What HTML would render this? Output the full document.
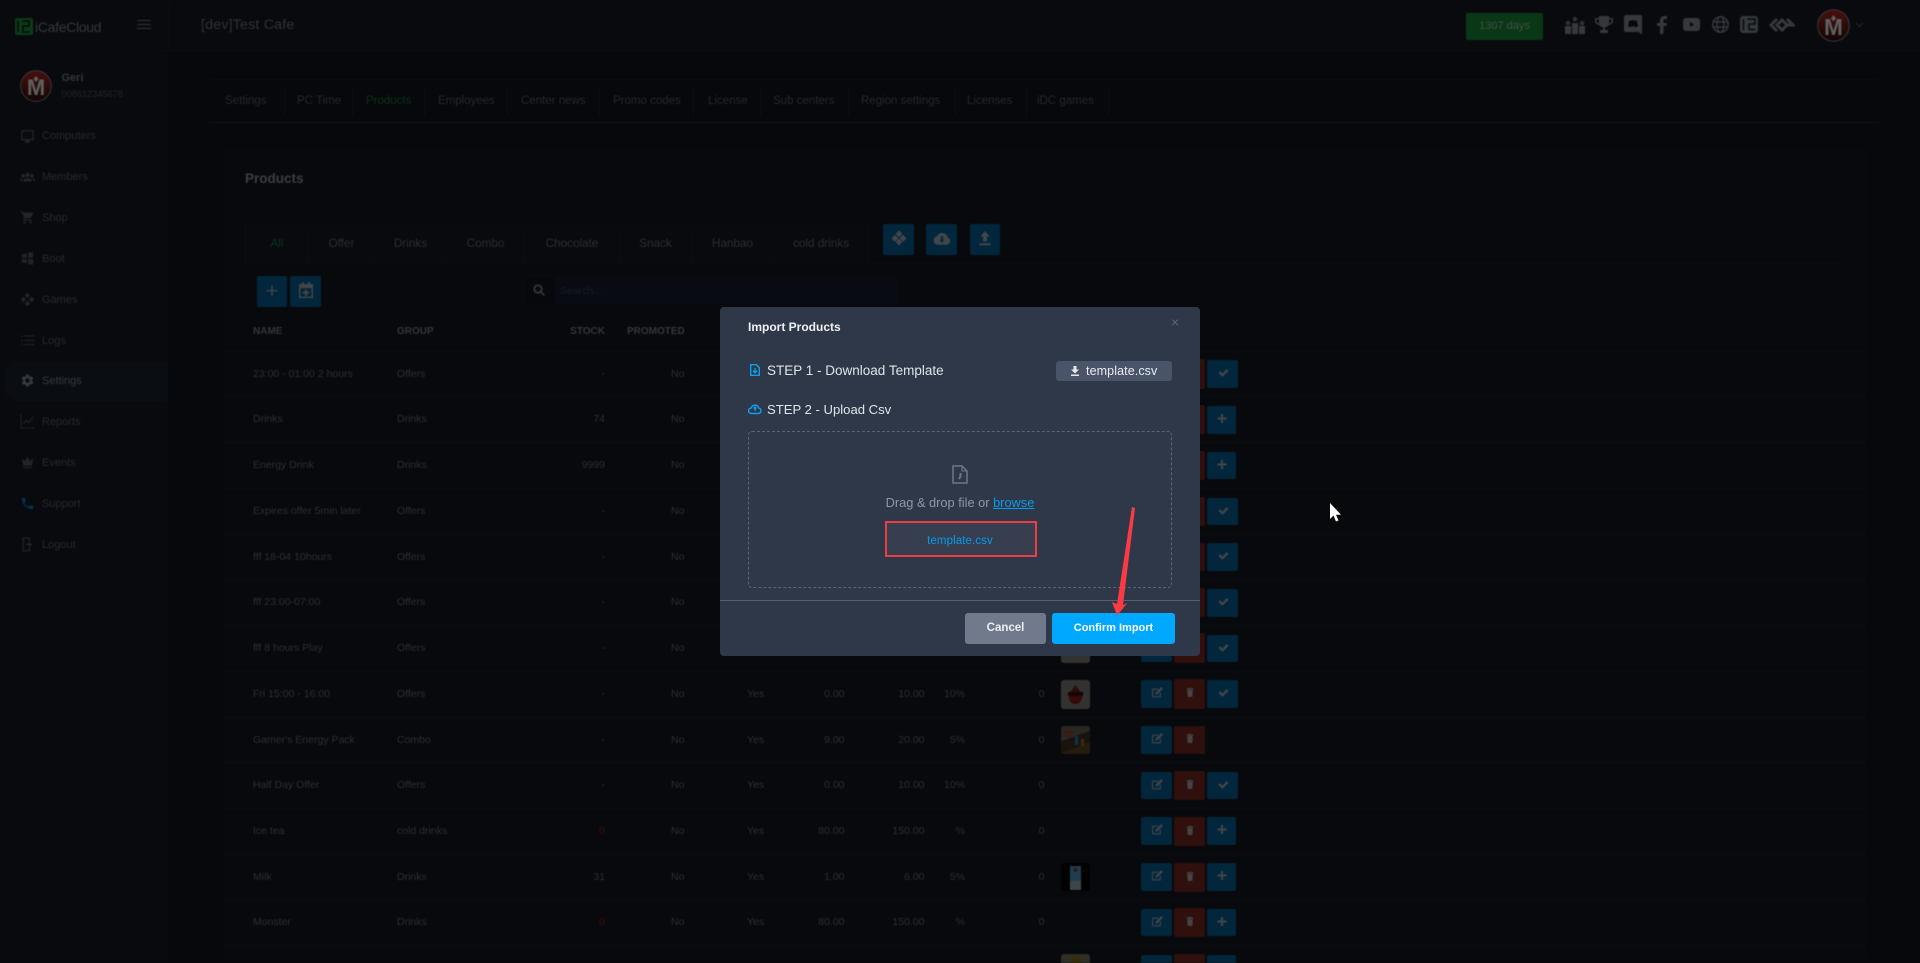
<!DOCTYPE html>
<html lang="en"><head><meta charset="utf-8"><title>Import Products</title>
<style>
*{box-sizing:border-box}
html,body{margin:0;padding:0;width:1920px;height:963px;overflow:hidden;background:#06080b;font-family:"Liberation Sans",sans-serif}
.a{position:absolute}
#bg{position:absolute;left:0;top:0;width:1920px;height:963px;filter:blur(.6px);color:#2b2e32;font-size:10.5px;overflow:hidden}
.t{position:absolute;white-space:nowrap;line-height:16px;height:16px}
.m{position:absolute;left:42px;color:#25282c;font-size:11px;line-height:16px;white-space:nowrap}
.i{position:absolute;left:20px;width:15px;height:15px;fill:#212428}
.tb{position:absolute;top:92.5px;line-height:16px;font-size:11.5px;color:#25282c;white-space:nowrap}
.d{position:absolute;top:87px;width:1px;height:30px;background:#0d1015}
.c{position:absolute;top:225px;height:38px;background:#080a0e;border-right:1px solid #0c0e13;text-align:center;line-height:38px;font-size:11.7px;color:#2a2d31}
.bb{position:absolute;background:#02263c;border-radius:2px}
.bb svg,.br svg{position:absolute;left:50%;top:50%;transform:translate(-50%,-62%);fill:#434649}
.br{position:absolute;background:#2f100c;border-radius:2px}
.l{position:absolute;left:222px;width:1645px;height:1px;background:#0a0c10}
.n{left:253px}.g{left:397px}
.s{left:544px;width:61px;text-align:right}
.p{left:671px}.y{left:747px}
.c1{left:784px;width:60.5px;text-align:right}
.c2{left:864px;width:60.5px;text-align:right}
.c3{left:905px;width:60px;text-align:right}
.c4{left:984px;width:60.5px;text-align:right}
.red{color:#440d0a}
.th{font-weight:bold;font-size:10px;color:#33363a}
.top-i{position:absolute;fill:#35383c}
#modal{position:absolute;left:720px;top:307px;width:480px;height:349px;background:#2f3849;border-radius:4px;color:#dfe3ea}
</style></head><body>
<svg width="0" height="0" style="position:absolute"><defs>
<symbol id="ed" viewBox="0 0 24 24"><path d="M3 5h11v2H5v12h12v-7h2v9H3zM20 2l3 3-10 10-4 1 1-4z"/></symbol>
<symbol id="tr" viewBox="0 0 24 24"><path d="M6 7h12l-1 15H7zM5 3h4l1-1h4l1 1h4v3H5z"/></symbol>
<symbol id="ck" viewBox="0 0 24 24"><path d="M2 13l4-4 5 5L20 4l4 4-13 13z"/></symbol>
<symbol id="pl" viewBox="0 0 24 24"><path d="M10 3h4v7h7v4h-7v7h-4v-7H3v-4h7z"/></symbol>
<linearGradient id="rg" x1="0" y1="0" x2="0" y2="1"><stop offset="0" stop-color="#4a0f0c"/><stop offset=".55" stop-color="#2a0a08"/><stop offset="1" stop-color="#120505"/></linearGradient>
</defs></svg>

<div id="bg">
<div class="a" style="left:0;top:51px;width:168px;height:912px;background:#080a0e"></div>
<div class="a" style="left:0;top:0;width:1920px;height:51px;background:#080a0e;border-bottom:1px solid #0c0e13"></div>
<div class="a" style="left:168px;top:0;width:1px;height:51px;background:#0c0e13"></div>
<div class="a" style="left:5px;top:362px;width:163px;height:40px;background:#0a0d12;border-radius:14px 0 0 14px"></div>

<svg class="a" style="left:15px;top:18px" width="19" height="18" viewBox="0 0 19 18"><rect width="18" height="17" rx="2" fill="#0a3a18"/><path d="M3 3v11M7 3h7v5H8v6h7" stroke="#06080b" stroke-width="1.6" fill="none"/></svg>
<div class="t" style="left:35px;top:19px;font-size:14px;color:#34373a;letter-spacing:-.3px">iCafeCloud</div>
<div class="a" style="left:136.5px;top:20px;width:14.5px;height:1px;background:#303337"></div>
<div class="a" style="left:136.5px;top:24px;width:14.5px;height:1px;background:#303337"></div>
<div class="a" style="left:136.5px;top:28px;width:14.5px;height:1px;background:#303337"></div>
<div class="t" style="left:201px;top:16.5px;font-size:14.2px;color:#2e3135;letter-spacing:.2px">[dev]Test Cafe</div>

<svg class="a" style="left:20px;top:70px" width="32" height="32" viewBox="0 0 32 32"><circle cx="16" cy="16" r="15.3" fill="url(#rg)" stroke="#35383c" stroke-width="1"/><path d="M16 6l2.500 3-2.500 3-2.500-3z" fill="#5e605f"/><text x="16" y="25" font-size="22" font-weight="bold" text-anchor="middle" fill="#5e605f" font-family="Liberation Sans">M</text></svg>
<div class="t" style="left:61.5px;top:69.5px;font-weight:bold;font-size:11px;color:#33363a">Geri</div>
<div class="t" style="left:61.5px;top:86px;font-size:9.2px;color:#212428">008612345678</div>

<svg class="i" style="top:129px" viewBox="0 0 24 24"><path d="M2 2h20v16h-7v2l2 2H7l2-2v-2H2zm2 2v12h16V4z"/></svg><div class="m" style="top:127.5px">Computers</div>
<svg class="i" style="top:169px" viewBox="0 0 24 24"><path d="M12 6a3.500 3.500 0 1 1 0 7 3.500 3.500 0 0 1 0-7zM5 8a3 3 0 1 1 0 6 3 3 0 0 1 0-6zm14 0a3 3 0 1 1 0 6 3 3 0 0 1 0-6zM5 20v-2c0-2 3-3 7-3s7 1 7 3v2zM0 19v-2c0-1.500 1.500-2.500 4-2.500-1 1-1 2.500-1 4.500zm24 0v-2c0-1.500-1.500-2.500-4-2.500 1 1 1 2.500 1 4.500z"/></svg><div class="m" style="top:168.5px">Members</div>
<svg class="i" style="top:210px" viewBox="0 0 24 24"><path d="M7 18c-1.100 0-2 .9-2 2s.9 2 2 2 2-.9 2-2-.9-2-2-2zM1 2v2h2l3.600 7.590-1.350 2.450c-.16.28-.25.61-.25.96 0 1.100.9 2 2 2h12v-2H7.420c-.14 0-.25-.11-.25-.25l.03-.12.9-1.630h7.450c.75 0 1.410-.41 1.750-1.030l3.580-6.490A1 1 0 0 0 20.010 4H5.210l-.94-2H1zm16 16c-1.100 0-2 .9-2 2s.9 2 2 2 2-.9 2-2-.9-2-2-2z"/></svg><div class="m" style="top:209.5px">Shop</div>
<svg class="i" style="top:251px" viewBox="0 0 24 24"><path d="M3 6l8-2v7H3zm10-3l8-1v9h-8zM3 13h8v7l-8-2zm10 0h8v9l-8-1z"/></svg><div class="m" style="top:250.5px">Boot</div>
<svg class="i" style="top:292px" viewBox="0 0 24 24"><path d="M12 1l4.500 4.500L12 10 7.500 5.500zM5.500 7.500L10 12l-4.500 4.500L1 12zm13 0L23 12l-4.500 4.500L14 12zM12 14l4.500 4.500L12 23l-4.500-4.500z"/></svg><div class="m" style="top:291.5px">Games</div>
<svg class="i" style="top:333px" viewBox="0 0 24 24"><path d="M2 4h2v2H2zm5 0h16v1.500H7zM2 11h2v2H2zm5 0h16v1.500H7zM2 18h2v2H2zm5 0h16v1.500H7z"/></svg><div class="m" style="top:332.7px">Logs</div>
<svg class="i" style="top:373px;fill:#36393d" viewBox="0 0 24 24"><path d="M19.140 12.940c.04-.3.06-.61.06-.94 0-.32-.02-.64-.07-.94l2.030-1.580a.49.49 0 0 0 .12-.61l-1.920-3.320a.488.488 0 0 0-.59-.22l-2.390.96c-.5-.38-1.030-.7-1.620-.94l-.36-2.540a.484.484 0 0 0-.48-.41h-3.840c-.24 0-.43.17-.47.41l-.36 2.540c-.59.24-1.130.57-1.620.94l-2.390-.96c-.22-.08-.47 0-.59.22L2.740 8.870c-.12.21-.08.47.12.61l2.030 1.580c-.05.3-.09.63-.09.94s.02.64.07.94l-2.030 1.580a.49.49 0 0 0-.12.61l1.920 3.320c.12.22.37.29.59.22l2.390-.96c.5.38 1.030.7 1.620.94l.36 2.540c.05.24.24.41.48.41h3.840c.24 0 .44-.17.47-.41l.36-2.540c.59-.24 1.130-.56 1.620-.94l2.390.96c.22.08.47 0 .59-.22l1.920-3.320c.12-.22.07-.47-.12-.61l-2.010-1.580zM12 15.600c-1.980 0-3.600-1.620-3.600-3.600s1.620-3.600 3.600-3.600 3.600 1.620 3.600 3.600-1.620 3.600-3.600 3.600z"/></svg><div class="m" style="top:372.7px;color:#36393d">Settings</div>
<svg class="i" style="top:414px" viewBox="0 0 24 24"><path d="M1 1h1.500v20.500H23V23H1zM5 15l5-6 4 3 7-8 1 1-8 9.500-4-3-4 5z"/></svg><div class="m" style="top:413.7px">Reports</div>
<svg class="i" style="top:455px" viewBox="0 0 24 24"><path d="M3 5l5 5 4-7 4 7 5-5-2 12H5zm2 14h14v2H5z"/></svg><div class="m" style="top:454.7px">Events</div>
<svg class="i" style="top:496px;fill:#013354" viewBox="0 0 24 24"><path d="M6.620 10.790c1.440 2.830 3.760 5.140 6.590 6.590l2.200-2.200c.27-.27.67-.36 1.020-.24 1.120.37 2.330.57 3.570.57.55 0 1 .45 1 1V20c0 .55-.45 1-1 1-9.390 0-17-7.610-17-17 0-.55.45-1 1-1h3.500c.55 0 1 .45 1 1 0 1.250.2 2.450.57 3.570.11.35.03.74-.25 1.020l-2.200 2.200z"/></svg><div class="m" style="top:495.7px">Support</div>
<svg class="i" style="top:537px" viewBox="0 0 24 24"><path d="M4 1h12v6h-2V3H6v18h8v-4h2v6H4zm10 7l6 4-6 4v-3H9v-2h5z"/></svg><div class="m" style="top:536.7px">Logout</div>

<div class="a" style="left:1466px;top:13px;width:77px;height:27px;background:#0a3715;border-radius:2px;color:#40514a;font-size:11px;line-height:26px;text-align:center">1307 days</div>
<svg class="top-i" style="left:1565px;top:16px" width="20" height="18" viewBox="0 0 20 18"><path d="M0 10h6v8H0zM7 7h6v11H7zM14 10h6v8h-6zM3 4l1 2 2 .2-1.500 1.400.4 2L3 8.700 1.100 9.600l.4-2L0 6.200 2 6zM10 0l1 2 2 .2-1.500 1.400.4 2L10 4.700 8.100 5.600l.4-2L7 2.200 9 2zM17 4l1 2 2 .2-1.500 1.400.4 2L17 8.700l-1.900.9.400-2L14 6.200l2-.2z"/></svg>
<svg class="top-i" style="left:1595px;top:16px" width="18" height="17" viewBox="0 0 18 17"><path d="M4 0h10v2h4v3c0 2-2 4-4.500 4.300C12.800 10.500 11.500 11 10 11.300V14h3v3H5v-3h3v-2.700C6.500 11 5.200 10.500 4.500 9.300 2 9 0 7 0 5V2h4zM1.500 3.500V5c0 1 .9 2 2.500 2.500V3.500zm15 0H14v4c1.600-.5 2.500-1.500 2.500-2.500z"/></svg>
<svg class="top-i" style="left:1624px;top:15px" width="18" height="20" viewBox="0 0 18 20"><path d="M2 0h14a2 2 0 0 1 2 2v18l-3-3H2a2 2 0 0 1-2-2V2a2 2 0 0 1 2-2z"/><path d="M5 6c2.500-1 5.500-1 8 0l1 5c-1 .8-2 1.100-3 1.200l-.6-1H7.600l-.6 1c-1-.1-2-.4-3-1.200z" fill="#06080b"/></svg>
<svg class="top-i" style="left:1657px;top:16px" width="10" height="18" viewBox="0 0 10 18"><path d="M3 18V10H0V7h3V4.500C3 1.500 5 0 7.500 0H10v3H8C7 3 6.500 3.500 6.500 4.500V7H10l-.5 3h-3v8z"/></svg>
<svg class="top-i" style="left:1683px;top:18px" width="17" height="13" viewBox="0 0 17 13"><path d="M3 0h11a3 3 0 0 1 3 3v7a3 3 0 0 1-3 3H3a3 3 0 0 1-3-3V3a3 3 0 0 1 3-3z"/><path d="M7 4l4 2.500L7 9z" fill="#06080b"/></svg>
<svg class="a" style="left:1712px;top:16px" width="17" height="17" viewBox="0 0 17 17" fill="none" stroke="#35383c" stroke-width="1.400"><circle cx="8.500" cy="8.500" r="7.700"/><ellipse cx="8.500" cy="8.500" rx="3.500" ry="7.700"/><path d="M1 6h15M1 11h15"/></svg>
<svg class="a" style="left:1740px;top:16px" width="18" height="17" viewBox="0 0 18 17"><rect width="18" height="17" rx="3" fill="#35383c"/><path d="M3.500 3v11M7.500 3H15v5H9v5.500h6.500" stroke="#06080b" stroke-width="1.400" fill="none"/></svg>
<svg class="a" style="left:1768px;top:16px" width="27" height="18" viewBox="0 0 27 18" fill="none" stroke="#35383c" stroke-width="3"><path d="M9 3L3 9l6 6M15 3l-6 6 6 6"/><path d="M13 3l6 6 6 0-6-6M13 15l6-6"/></svg>
<svg class="a" style="left:1817px;top:9px" width="33" height="33" viewBox="0 0 32 32"><circle cx="16" cy="16" r="15.300" fill="url(#rg)" stroke="#35383c" stroke-width="1"/><path d="M16 6l2.500 3-2.500 3-2.500-3z" fill="#5e605f"/><text x="16" y="25" font-size="22" font-weight="bold" text-anchor="middle" fill="#5e605f" font-family="Liberation Sans">M</text></svg>
<svg class="a" style="left:1855px;top:22px" width="9" height="6" viewBox="0 0 9 6" fill="none" stroke="#25282c"><path d="M1 1l3.500 3.500L8 1"/></svg>

<div class="a" style="left:209px;top:79px;width:1670px;height:1px;background:#0c0e13"></div>
<div class="a" style="left:209px;top:122px;width:1670px;height:1px;background:#0f1217"></div>
<div class="tb" style="left:225px">Settings</div><div class="d" style="left:284px"></div>
<div class="tb" style="left:297px">PC Time</div><div class="d" style="left:352px"></div>
<div class="tb" style="left:366px;color:#0b3316">Products</div><div class="d" style="left:424px"></div>
<div class="tb" style="left:438px">Employees</div><div class="d" style="left:507px"></div>
<div class="tb" style="left:521px">Center news</div><div class="d" style="left:599px"></div>
<div class="tb" style="left:613px">Promo codes</div><div class="d" style="left:693px"></div>
<div class="tb" style="left:708px">License</div><div class="d" style="left:760px"></div>
<div class="tb" style="left:773px">Sub centers</div><div class="d" style="left:848px"></div>
<div class="tb" style="left:861px">Region settings</div><div class="d" style="left:955px"></div>
<div class="tb" style="left:967px">Licenses</div><div class="d" style="left:1026px"></div>
<div class="tb" style="left:1037px">iDC games</div><div class="d" style="left:1108px"></div>

<div class="a" style="left:222px;top:147px;width:1645px;height:816px;background:#07090c"></div>
<div class="t" style="left:245px;top:171px;font-weight:bold;font-size:13.5px;color:#3b3e42">Products</div>

<div class="c" style="left:245px;width:64px;color:#0b3316;border-left:1px solid #0c0e13">All</div>
<div class="c" style="left:309px;width:66px">Offer</div>
<div class="c" style="left:375px;width:72px">Drinks</div>
<div class="c" style="left:447px;width:78px">Combo</div>
<div class="c" style="left:525px;width:95px">Chocolate</div>
<div class="c" style="left:620px;width:72px">Snack</div>
<div class="c" style="left:692px;width:82px">Hanbao</div>
<div class="c" style="left:774px;width:95px">cold drinks</div>
<div class="a" style="left:245px;top:263px;width:1600px;height:1px;background:#0a0c10"></div>

<div class="bb" style="left:883px;top:224px;width:31px;height:31px"><svg width="15" height="17" viewBox="0 0 24 24"><path d="M12 0l5.500 5.500L12 11 6.500 5.500zM5.500 7L11 12.500 5.500 18 0 12.500zm13 0l5.500 5.500-5.500 5.500-5.500-5.500zM12 13l5.500 5.500L12 24l-5.500-5.500z"/></svg></div>
<div class="bb" style="left:926px;top:224px;width:31px;height:31px"><svg width="17" height="14" viewBox="0 0 24 18"><path d="M6 18a6 6 0 0 1-1-11.900A8 8 0 0 1 20 7.500 5.500 5.500 0 0 1 19 18z"/><path d="M10.500 6h3v5H16l-4 4-4-4h2.500z" fill="#02263c"/></svg></div>
<div class="bb" style="left:970px;top:224px;width:30px;height:31px"><svg width="11" height="15" viewBox="0 0 14 18"><path d="M7 0l6 7H9.500v6h-5V7H1zM0 15.500h14V18H0z"/></svg></div>

<div class="bb" style="left:257px;top:276px;width:30px;height:31px"><svg width="11" height="11" viewBox="0 0 12 12"><path d="M5.200 0h1.600v5.200H12v1.600H6.800V12H5.200V6.800H0V5.200h5.200z"/></svg></div>
<div class="bb" style="left:290px;top:276px;width:31px;height:31px"><svg width="14" height="16" viewBox="0 0 14 16"><path d="M3 0h2v2h4V0h2v2h3v14H0V2h3zM1.500 6v8.500h11V6zM6 7.500h2v2h2v2H8v2H6v-2H4v-2h2z"/></svg></div>
<div class="a" style="left:524px;top:276px;width:31px;height:29px;background:#06080b;border:1px solid #0a0c10"></div>
<svg class="a" style="left:533px;top:284px" width="12" height="12" viewBox="0 0 12 12" fill="none" stroke="#303337" stroke-width="2"><circle cx="5" cy="5" r="3.700"/><path d="M8 8l3.300 3.300"/></svg>
<div class="a" style="left:555px;top:276px;width:343px;height:29px;background:#090b12"></div>
<div class="t" style="left:560px;top:282.5px;color:#1a1d21">Search...</div>

<div class="t th n" style="top:324.2px">NAME</div>
<div class="t th g" style="top:324.2px">GROUP</div>
<div class="t th s" style="top:324.2px">STOCK</div>
<div class="t th" style="left:627px;top:324.2px">PROMOTED</div>
<div class="l" style="top:351px"></div><div class="l" style="top:396px"></div><div class="l" style="top:442px"></div><div class="l" style="top:488px"></div><div class="l" style="top:534px"></div><div class="l" style="top:579px"></div><div class="l" style="top:625px"></div><div class="l" style="top:671px"></div><div class="l" style="top:717px"></div><div class="l" style="top:762px"></div><div class="l" style="top:808px"></div><div class="l" style="top:854px"></div><div class="l" style="top:899px"></div><div class="l" style="top:945px"></div>

<div class="t n" style="top:365.8px">23:00 - 01:00 2 hours</div><div class="t g" style="top:365.8px">Offers</div><div class="t s" style="top:365.8px">-</div><div class="t p" style="top:365.8px">No</div>
<div class="t n" style="top:411px">Drinks</div><div class="t g" style="top:411px">Drinks</div><div class="t s" style="top:411px">74</div><div class="t p" style="top:411px">No</div>
<div class="t n" style="top:457px">Energy Drink</div><div class="t g" style="top:457px">Drinks</div><div class="t s" style="top:457px">9999</div><div class="t p" style="top:457px">No</div>
<div class="t n" style="top:503px">Expires offer 5min later</div><div class="t g" style="top:503px">Offers</div><div class="t s" style="top:503px">-</div><div class="t p" style="top:503px">No</div>
<div class="t n" style="top:548.8px">fff 18-04 10hours</div><div class="t g" style="top:548.8px">Offers</div><div class="t s" style="top:548.8px">-</div><div class="t p" style="top:548.8px">No</div>
<div class="t n" style="top:594px">fff 23:00-07:00</div><div class="t g" style="top:594px">Offers</div><div class="t s" style="top:594px">-</div><div class="t p" style="top:594px">No</div>
<div class="t n" style="top:640px">fff 8 hours Play</div><div class="t g" style="top:640px">Offers</div><div class="t s" style="top:640px">-</div><div class="t p" style="top:640px">No</div>

<div class="t n" style="top:686px">Fri 15:00 - 16:00</div><div class="t g" style="top:686px">Offers</div><div class="t s" style="top:686px">-</div><div class="t p" style="top:686px">No</div><div class="t y" style="top:686px">Yes</div><div class="t c1" style="top:686px">0.00</div><div class="t c2" style="top:686px">10.00</div><div class="t c3" style="top:686px">10%</div><div class="t c4" style="top:686px">0</div>
<div class="t n" style="top:732px">Gamer's Energy Pack</div><div class="t g" style="top:732px">Combo</div><div class="t s" style="top:732px">-</div><div class="t p" style="top:732px">No</div><div class="t y" style="top:732px">Yes</div><div class="t c1" style="top:732px">9.00</div><div class="t c2" style="top:732px">20.00</div><div class="t c3" style="top:732px">5%</div><div class="t c4" style="top:732px">0</div>
<div class="t n" style="top:777px">Half Day Offer</div><div class="t g" style="top:777px">Offers</div><div class="t s" style="top:777px">-</div><div class="t p" style="top:777px">No</div><div class="t y" style="top:777px">Yes</div><div class="t c1" style="top:777px">0.00</div><div class="t c2" style="top:777px">10.00</div><div class="t c3" style="top:777px">10%</div><div class="t c4" style="top:777px">0</div>
<div class="t n" style="top:823px">Ice tea</div><div class="t g" style="top:823px">cold drinks</div><div class="t s red" style="top:823px">0</div><div class="t p" style="top:823px">No</div><div class="t y" style="top:823px">Yes</div><div class="t c1" style="top:823px">80.00</div><div class="t c2" style="top:823px">150.00</div><div class="t c3" style="top:823px">%</div><div class="t c4" style="top:823px">0</div>
<div class="t n" style="top:869px">Milk</div><div class="t g" style="top:869px">Drinks</div><div class="t s" style="top:869px">31</div><div class="t p" style="top:869px">No</div><div class="t y" style="top:869px">Yes</div><div class="t c1" style="top:869px">1.00</div><div class="t c2" style="top:869px">6.00</div><div class="t c3" style="top:869px">5%</div><div class="t c4" style="top:869px">0</div>
<div class="t n" style="top:914px">Monster</div><div class="t g" style="top:914px">Drinks</div><div class="t s red" style="top:914px">0</div><div class="t p" style="top:914px">No</div><div class="t y" style="top:914px">Yes</div><div class="t c1" style="top:914px">80.00</div><div class="t c2" style="top:914px">150.00</div><div class="t c3" style="top:914px">%</div><div class="t c4" style="top:914px">0</div>

<div class="a" style="left:1061px;top:634px;width:29px;height:29px;background:#323231;border-radius:3px"></div>
<div class="a" style="left:1061px;top:680px;width:29px;height:29px;background:#323231;border-radius:3px"><svg width="29" height="29" viewBox="0 0 29 29"><path d="M14.500 5l5 7c3 4 1.500 12-5 12s-8-8-5-12z" fill="#300807"/><rect x="7" y="12" width="15" height="4" fill="#170504"/><rect x="9" y="17" width="11" height="4" fill="#3a0a08"/></svg></div>
<div class="a" style="left:1061px;top:726px;width:29px;height:28px;background:linear-gradient(160deg,#2a2620 0 40%,#18140d 40% 70%,#261c0e 70%);border-radius:3px"><svg width="29" height="28" viewBox="0 0 29 28"><rect x="14" y="10" width="3" height="9" fill="#0a3350"/><rect x="20" y="13" width="3" height="7" fill="#44260c"/><path d="M3 5h10v2H3zM4 9h6v1H4z" fill="#4a1210"/></svg></div>
<div class="a" style="left:1061px;top:863px;width:29px;height:28px;background:#010102;border-radius:3px"><svg width="29" height="28" viewBox="0 0 29 28"><rect x="9" y="3" width="11" height="24" fill="#1f3d50"/><rect x="9" y="18" width="11" height="9" fill="#404548"/><circle cx="14.500" cy="7" r="2" fill="#401210"/></svg></div>
<div class="a" style="left:1061px;top:954px;width:29px;height:20px;background:#2e2e26;border-radius:3px"><svg width="29" height="20" viewBox="0 0 29 20"><rect x="10" y="3" width="10" height="17" fill="#352c07"/></svg></div>

<div class="br" style="left:1174px;top:359px;width:31px;height:30px"></div><div class="bb" style="left:1207px;top:360px;width:31px;height:28px"><svg width="12" height="11"><use href="#ck"/></svg></div>
<div class="br" style="left:1174px;top:405px;width:31px;height:29px"></div><div class="bb" style="left:1207px;top:406px;width:29px;height:28px"><svg width="12" height="12"><use href="#pl"/></svg></div>
<div class="br" style="left:1174px;top:451px;width:31px;height:29px"></div><div class="bb" style="left:1207px;top:452px;width:29px;height:27px"><svg width="12" height="12"><use href="#pl"/></svg></div>
<div class="br" style="left:1174px;top:497px;width:31px;height:29px"></div><div class="bb" style="left:1207px;top:498px;width:31px;height:27px"><svg width="12" height="11"><use href="#ck"/></svg></div>
<div class="br" style="left:1174px;top:543px;width:31px;height:28px"></div><div class="bb" style="left:1207px;top:543px;width:31px;height:28px"><svg width="12" height="11"><use href="#ck"/></svg></div>
<div class="br" style="left:1174px;top:588px;width:31px;height:29px"></div><div class="bb" style="left:1207px;top:589px;width:31px;height:28px"><svg width="12" height="11"><use href="#ck"/></svg></div>

<div class="bb" style="left:1141px;top:634px;width:31px;height:28px"></div><div class="br" style="left:1174px;top:633px;width:31px;height:30px"></div><div class="bb" style="left:1207px;top:635px;width:31px;height:27px"><svg width="12" height="11"><use href="#ck"/></svg></div>

<div class="bb" style="left:1141px;top:680px;width:31px;height:28px"><svg width="14" height="13"><use href="#ed"/></svg></div><div class="br" style="left:1174px;top:679px;width:31px;height:30px"><svg width="11" height="13"><use href="#tr"/></svg></div><div class="bb" style="left:1207px;top:680px;width:31px;height:28px"><svg width="12" height="11"><use href="#ck"/></svg></div>
<div class="bb" style="left:1141px;top:726px;width:31px;height:28px"><svg width="14" height="13"><use href="#ed"/></svg></div><div class="br" style="left:1174px;top:726px;width:31px;height:28px"><svg width="11" height="13"><use href="#tr"/></svg></div>
<div class="bb" style="left:1141px;top:772px;width:31px;height:27px"><svg width="14" height="13"><use href="#ed"/></svg></div><div class="br" style="left:1174px;top:771px;width:31px;height:29px"><svg width="11" height="13"><use href="#tr"/></svg></div><div class="bb" style="left:1207px;top:772px;width:31px;height:27px"><svg width="12" height="11"><use href="#ck"/></svg></div>
<div class="bb" style="left:1141px;top:817px;width:31px;height:28px"><svg width="14" height="13"><use href="#ed"/></svg></div><div class="br" style="left:1174px;top:817px;width:31px;height:29px"><svg width="11" height="13"><use href="#tr"/></svg></div><div class="bb" style="left:1207px;top:817px;width:29px;height:28px"><svg width="12" height="12"><use href="#pl"/></svg></div>
<div class="bb" style="left:1141px;top:863px;width:31px;height:28px"><svg width="14" height="13"><use href="#ed"/></svg></div><div class="br" style="left:1174px;top:863px;width:31px;height:29px"><svg width="11" height="13"><use href="#tr"/></svg></div><div class="bb" style="left:1207px;top:863px;width:29px;height:28px"><svg width="12" height="12"><use href="#pl"/></svg></div>
<div class="bb" style="left:1141px;top:909px;width:31px;height:27px"><svg width="14" height="13"><use href="#ed"/></svg></div><div class="br" style="left:1174px;top:908px;width:31px;height:29px"><svg width="11" height="13"><use href="#tr"/></svg></div><div class="bb" style="left:1207px;top:909px;width:29px;height:27px"><svg width="12" height="12"><use href="#pl"/></svg></div>
<div class="bb" style="left:1141px;top:955px;width:31px;height:20px"></div><div class="br" style="left:1174px;top:954px;width:31px;height:20px"></div><div class="bb" style="left:1207px;top:955px;width:29px;height:20px"></div>
</div>

<div id="modal">
<div class="t" style="left:28px;top:12px;font-weight:bold;font-size:12px;color:#eef0f4">Import Products</div>
<div class="t" style="left:451px;top:7px;font-size:14px;color:#5b6576">×</div>
<div class="a" style="left:0;top:42px;width:480px;height:1px;background:#2c3450"></div>

<svg class="a" style="left:30px;top:57px" width="10" height="12" viewBox="0 0 10 12" fill="none" stroke="#0ea0ee" stroke-width="1.400"><path d="M.7.7h5.600l3 3v7.600H.7zM5 4v4.500M3 6.800l2 2 2-2"/></svg>
<div class="t" style="left:47px;top:55.5px;font-size:13.5px;color:#dfe3ea">STEP 1 - Download Template</div>
<div class="a" style="left:336px;top:54px;width:116px;height:20px;background:#4a5468;border-radius:3px"></div>
<svg class="a" style="left:351px;top:58.5px" width="8" height="10" viewBox="0 0 8 10" fill="#e4e7ec"><path d="M2.500 0h3v3.500H8L4 7.500 0 3.500h2.500zM0 8.500h8V10H0z"/></svg>
<div class="t" style="left:366px;top:56px;font-size:12.5px;color:#e8ebf0;letter-spacing:.1px">template.csv</div>

<svg class="a" style="left:28px;top:96px" width="14" height="12" viewBox="0 0 14 12" fill="none" stroke="#0ea0ee" stroke-width="1.400"><path d="M3.500 10.500a2.800 2.800 0 0 1-.3-5.600A3.900 3.900 0 0 1 10.700 5a2.800 2.800 0 0 1 0 5.500zM7 8V4M5.500 5.500L7 4l1.500 1.500"/></svg>
<div class="t" style="left:47px;top:94.5px;font-size:13.1px;color:#dfe3ea">STEP 2 - Upload Csv</div>

<div class="a" style="left:28px;top:124px;width:424px;height:157px;border:1px dashed #596377;border-radius:4px"></div>
<svg class="a" style="left:232px;top:158px" width="16" height="19" viewBox="0 0 16 19" fill="none" stroke="#6d7789" stroke-width="1.500"><path d="M1 1h9l5 5v12H1z"/><path d="M10 1v5h5" stroke-width="1"/><path d="M8.500 8v3.500L7 14" stroke-width="2"/></svg>
<div class="t" style="left:165px;top:188px;width:150px;text-align:center;font-size:12.8px;color:#8e97a6">Drag &amp; drop file or <span style="color:#0a9ae8;text-decoration:underline">browse</span></div>
<div class="a" style="left:165px;top:214px;width:152px;height:36px;border:2px solid #ef3b42;background:#363e4f"></div>
<div class="t" style="left:164px;top:225.5px;width:152px;text-align:center;font-size:11.5px;color:#0a9ae8;letter-spacing:.1px">template.csv</div>
<div class="a" style="left:0;top:293px;width:480px;height:1px;background:#566074"></div>
<div class="a" style="left:245px;top:306px;width:81px;height:31px;background:#717a8c;border-radius:3px;color:#eceef2;font-weight:bold;font-size:11.5px;line-height:31px;text-align:center">Cancel</div>
<div class="a" style="left:332px;top:306px;width:123px;height:31px;background:#00a8ff;border-radius:3px;color:#fff;font-weight:bold;font-size:11px;line-height:31px;text-align:center">Confirm Import</div>
</div>

<svg class="a" style="left:0;top:0;pointer-events:none" width="1920" height="963"><path d="M1132 507L1135 508 1123 605 1127.500 603 1117 615.500 1112 602 1117 604z" fill="#fb3b44"/>
<path d="M1330 503v16l3.500-3.500 2.500 6 2.500-1-2.500-5.800h5z" fill="#fff"/></svg>
</body></html>
